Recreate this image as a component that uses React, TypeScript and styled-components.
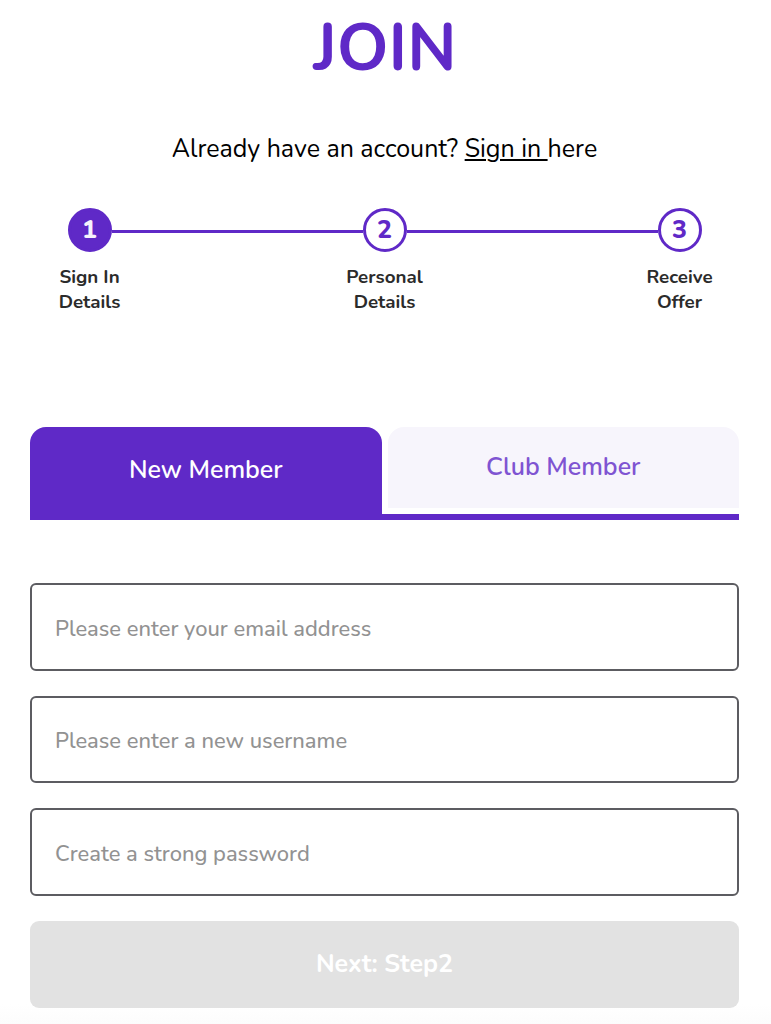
import { Fragment, useState } from "react";
import styled, { createGlobalStyle } from "styled-components";

const steps = [
  ["Sign In", "Details"],
  ["Personal", "Details"],
  ["Receive", "Offer"],
];

const fields = [
  { name: "email", type: "email", placeholder: "Please enter your email address" },
  { name: "username", type: "text", placeholder: "Please enter a new username" },
  { name: "password", type: "password", placeholder: "Create a strong password" },
];

const App = () => {
  const [tab, setTab] = useState("new");

  return (
    <>
      <GlobalStyle />
      <Container>
        <Title>JOIN</Title>
        <SignInText>
          Already have an account? <a href="#">Sign in </a>here
        </SignInText>
        <Steps>
          {steps.map(([first, second], i) => (
            <Fragment key={i}>
              {i > 0 && <StepLine />}
              <Step>
                <StepNumber $active={i === 0}>{i + 1}</StepNumber>
                <StepLabel>
                  {first}
                  <br />
                  {second}
                </StepLabel>
              </Step>
            </Fragment>
          ))}
        </Steps>
        <Tabs>
          <Tab $active={tab === "new"} onClick={() => setTab("new")}>
            New Member
          </Tab>
          <Tab $active={tab === "club"} onClick={() => setTab("club")}>
            Club Member
          </Tab>
        </Tabs>
        <Form onSubmit={(e) => e.preventDefault()}>
          {fields.map((field) => (
            <Input
              key={field.name}
              name={field.name}
              type={field.type}
              placeholder={field.placeholder}
            />
          ))}
          <NextButton disabled>Next: Step2</NextButton>
        </Form>
      </Container>
    </>
  );
};

export default App;

const GlobalStyle = createGlobalStyle`
  * {
    box-sizing: border-box;
  }
  body {
    margin: 0;
    background: #fff;
    color: #000;
    font-family: Nunito, Lato, "Liberation Sans", sans-serif;
  }
  button,
  input {
    font-family: inherit;
  }
`;

const Container = styled.main`
  height: 1024px;
  padding: 0 32px 0 30px;
  overflow: hidden;
  background: linear-gradient(#fff 1004px, #fcfcfc 1024px);
`;
const Title = styled.h1`
  margin: 0;
  padding: 8px 0 0 1px;
  height: 129px;
  color: #5f29c7;
  font-size: 66px;
  line-height: 80px;
  font-weight: 700;
  text-align: center;
`;
const SignInText = styled.p`
  margin: 0;
  height: 79px;
  font-size: 25px;
  line-height: 40px;
  text-align: center;
  white-space: nowrap;

  a {
    color: inherit;
    text-decoration-thickness: 2px;
    text-underline-offset: 2px;
  }
`;
const Steps = styled.div`
  display: flex;
  align-items: flex-start;
  height: 219px;
  padding: 0 37.5px;
`;
const Step = styled.div`
  display: flex;
  flex-direction: column;
  align-items: center;
  width: 44px;
`;
const StepNumber = styled.div<{ $active: boolean }>`
  display: flex;
  align-items: center;
  justify-content: center;
  width: 44px;
  height: 44px;
  padding-bottom: 1px;
  border: 3px solid #5f29c7;
  border-radius: 50%;
  background: ${({ $active }) => ($active ? "#5f29c7" : "#fff")};
  color: ${({ $active }) => ($active ? "#f6f3fc" : "#5f29c7")};
  font-size: 25px;
  line-height: 30px;
  font-weight: 800;
`;
const StepLine = styled.div`
  flex: 1;
  height: 3px;
  margin-top: 22px;
  background: #5f29c7;
`;
const StepLabel = styled.div`
  margin-top: 13px;
  color: #2b2b2b;
  font-size: 18.75px;
  line-height: 25px;
  font-weight: 700;
  text-align: center;
  white-space: nowrap;
`;
const Tabs = styled.div`
  display: flex;
  align-items: flex-start;
  gap: 6px;
  height: 93px;
  border-bottom: 6px solid #5f29c7;
`;
const Tab = styled.button<{ $active: boolean }>`
  flex: 1;
  height: ${({ $active }) => ($active ? "87px" : "81px")};
  padding: 0 0 ${({ $active }) => ($active ? "1px" : "2px")};
  border: 0;
  border-radius: 16px 16px 0 0;
  background: ${({ $active }) => ($active ? "#5f29c7" : "#f7f5fc")};
  color: ${({ $active }) => ($active ? "#fff" : "#7f54d2")};
  font-size: 25px;
  font-weight: 600;
  cursor: pointer;
`;
const Form = styled.form`
  display: flex;
  flex-direction: column;
  gap: 25px;
  padding-top: 63px;
`;
const Input = styled.input`
  width: 100%;
  height: 87.5px;
  padding: 4px 24px 0 23px;
  border: 2px solid #5c5c61;
  border-radius: 6px;
  background: #fff;
  color: #2b2b2b;
  font-size: 21.9px;
  font-weight: 500;

  &::placeholder {
    color: #929292;
    opacity: 1;
  }
`;
const NextButton = styled.button`
  height: 87.5px;
  padding: 0;
  border: 0;
  border-radius: 9px;
  background: #e2e2e2;
  color: #fff;
  font-size: 25px;
  font-weight: 700;
`;
